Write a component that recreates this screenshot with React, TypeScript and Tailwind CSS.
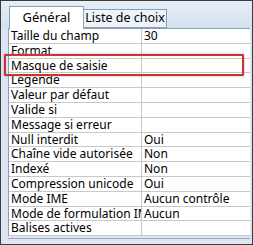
import React from "react";

const rows: [string, string][] = [
  ["Taille du champ", "30"],
  ["Format", ""],
  ["Masque de saisie", ""],
  ["Légende", ""],
  ["Valeur par défaut", ""],
  ["Valide si", ""],
  ["Message si erreur", ""],
  ["Null interdit", "Oui"],
  ["Chaîne vide autorisée", "Non"],
  ["Indexé", "Non"],
  ["Compression unicode", "Oui"],
  ["Mode IME", "Aucun contrôle"],
  ["Mode de formulation IME", "Aucun"],
  ["Balises actives", ""],
];

export default function App() {
  return (
    <div
      className="relative w-[253px] h-[245px] border border-[#3c3c3c] bg-[#dbe6f2] flex flex-col overflow-hidden text-black"
      style={{ fontFamily: '"Noto Sans", "Open Sans", sans-serif' }}
    >
      <div className="h-[27px] flex items-end pl-[8px] bg-gradient-to-b from-[#e6eef7] to-[#d3e1f0]">
        <div className="w-[75px] h-[23px] bg-white border border-b-0 border-[#8aa0b8] flex items-center justify-center text-[13px] leading-none relative z-10 -mb-px pb-[2px]">
          Général
        </div>
        <div className="w-[83px] h-[19px] bg-[#eef3f9] border border-l-0 border-[#8aa0b8] flex items-center justify-center text-[12.5px] leading-none">
          Liste de choix
        </div>
      </div>
      <div className="ml-[7px] mr-[2px] border-l border-t border-[#8aa0b8] bg-white">
        {rows.map(([k, v]) => (
          <div key={k} className="flex h-[14.8px] border-b border-[#c8c8c8] text-[12px] leading-[13.8px]">
            <div className="w-[133px] pl-[2px] border-r border-[#c8c8c8] whitespace-nowrap overflow-x-clip">{k}</div>
            <div className="flex-1 pl-[2px] whitespace-nowrap">{v}</div>
          </div>
        ))}
      </div>
      <div className="ml-[7px] mr-[2px] mt-[2px] h-[1px] bg-[#9aa8b8]" />
      <div className="absolute left-[3px] top-[53px] w-[240px] h-[22px] border-2 border-[#cc3333] rounded-[1px] shadow-[0_0_2px_#e08080]" />
    </div>
  );
}
